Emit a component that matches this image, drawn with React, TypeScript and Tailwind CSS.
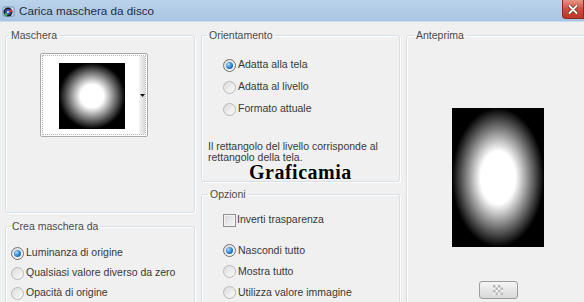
import type { ReactNode } from 'react'

function Radio({ label, checked = false }: { label: string; checked?: boolean }) {
  return (
    <div className="flex items-center gap-[2px] h-full">
      <span
        className={`w-[13px] h-[13px] rounded-full border flex items-center justify-center shrink-0 bg-gradient-to-br from-[#dcdcdc] to-[#fbfbfb] ${
          checked ? 'border-[#6f6f6f]' : 'border-[#b9b9b9]'
        }`}
      >
        {checked && (
          <span className="w-[7px] h-[7px] rounded-full bg-[radial-gradient(circle_at_35%_35%,#9fdcff_0%,#2a7fd0_55%,#0d3f86_100%)]" />
        )}
      </span>
      <span>{label}</span>
    </div>
  )
}

function Group({
  title,
  legend,
  className,
  children,
}: {
  title: string
  legend: string
  className: string
  children: ReactNode
}) {
  return (
    <fieldset
      className={`border border-[#d5dfe5] rounded-[3px] shadow-[inset_1px_1px_0_#fff,1px_1px_0_#fff] ${className}`}
    >
      <legend className={`px-[2px] leading-[13px] text-[#4a4a4a] ${legend}`}>{title}</legend>
      {children}
    </fieldset>
  )
}

export default function App() {
  return (
    <div
      className="relative w-[584px] h-[302px] overflow-hidden bg-[#f0f0f0] text-[10.5px] text-[#383838]"
      style={{ fontFamily: '"Liberation Sans", Arial, sans-serif' }}
    >
      {/* Title bar */}
      <div className="flex items-center h-[22px] bg-gradient-to-b from-[#bcd3ec] to-[#a9c4e1] border-b border-[#c9dbee]">
        <svg width="14" height="14" viewBox="0 0 14 14" className="ml-[2px] mr-[3px]">
          <rect x="1" y="3" width="11" height="9" rx="1" fill="#d9e8f7" stroke="#5a7ca6" strokeWidth="0.8" />
          <circle cx="6" cy="8" r="4.5" fill="#1b1b1b" />
          <circle cx="6" cy="8" r="3" fill="#3a4fb8" />
          <path d="M6 8 L9.5 5 A4.5 4.5 0 0 1 10.5 8 Z" fill="#d93a3a" />
          <path d="M6 8 L2 10 A4.5 4.5 0 0 0 5 12.4 Z" fill="#36b24a" />
          <circle cx="6" cy="8" r="1" fill="#e8e8e8" />
        </svg>
        <span className="text-[11.7px] text-[#1e2f45]">Carica maschera da disco</span>
        <div className="ml-auto self-start w-[22px] h-[19px] rounded-bl-[4px] border border-t-0 border-[#8a2a22] bg-gradient-to-b from-[#e39586] via-[#cf4c40] to-[#c0352a] flex items-center justify-center">
          <svg width="10" height="9" viewBox="0 0 10 9">
            <path d="M1.5 1 L8.5 8 M8.5 1 L1.5 8" stroke="#5a1a14" strokeWidth="3.2" strokeLinecap="round" />
            <path d="M1.5 1 L8.5 8 M8.5 1 L1.5 8" stroke="#fff" strokeWidth="2" strokeLinecap="round" />
          </svg>
        </div>
      </div>

      {/* Body */}
      <div className="flex gap-[6px] pl-[5px] pt-[7px]">
        {/* Column 1 */}
        <div className="w-[190px] shrink-0 flex flex-col gap-[7px]">
          <Group title="Maschera" legend="ml-[3px]" className="h-[184px]">
            <div className="ml-[34px] mt-[11px] w-[108px] h-[84px] border border-[#a9a9a9] rounded-[2px] bg-white p-[1px]">
              <div className="flex h-full border border-dotted border-[#b5b5b5]">
                <div className="flex-1 pl-[16px] pt-[7px]">
                  <div className="w-[66px] h-[66px] bg-[radial-gradient(circle_closest-side,#fff_35%,#000_100%)]" />
                </div>
                <div className="w-[6px] bg-gradient-to-r from-[#f4f4f4] to-[#d9d9d9] flex items-center justify-center">
                  <svg width="5" height="3" viewBox="0 0 5 3">
                    <path d="M0 0 H5 L2.5 3 Z" fill="#111" />
                  </svg>
                </div>
              </div>
            </div>
          </Group>
          <Group title="Crea maschera da" legend="ml-[4px]" className="h-[120px]">
            <div className="pl-[5px] pt-[10px]">
              <div className="h-[20px]">
                <Radio label="Luminanza di origine" checked />
              </div>
              <div className="h-[20px]">
                <Radio label="Qualsiasi valore diverso da zero" />
              </div>
              <div className="h-[20px]">
                <Radio label="Opacità di origine" />
              </div>
            </div>
          </Group>
        </div>

        {/* Column 2 */}
        <div className="w-[199px] shrink-0 flex flex-col gap-[6px]">
          <Group title="Orientamento" legend="ml-[5px]" className="h-[153px]">
            <div className="pl-[21px] pt-[12px]">
              <div className="h-[22px]">
                <Radio label="Adatta alla tela" checked />
              </div>
              <div className="h-[22px]">
                <Radio label="Adatta al livello" />
              </div>
              <div className="h-[22px]">
                <Radio label="Formato attuale" />
              </div>
            </div>
            <p className="pl-[6px] pr-[8px] mt-[21px] leading-[11px]">
              Il rettangolo del livello corrisponde al rettangolo della tela.
            </p>
          </Group>
          <Group title="Opzioni" legend="ml-[6px]" className="h-[130px]">
            <div className="pl-[21px] pt-[9px]">
              <div className="flex items-center gap-[1px] h-[20px]">
                <span className="w-[13px] h-[13px] border border-[#8f8f8f] bg-gradient-to-br from-[#d8d8d8] to-[#f8f8f8] shadow-[inset_0_0_0_1px_#f4f4f4]" />
                <span>Inverti trasparenza</span>
              </div>
              <div className="mt-[10px]">
                <div className="h-[21px]">
                  <Radio label="Nascondi tutto" checked />
                </div>
                <div className="h-[21px]">
                  <Radio label="Mostra tutto" />
                </div>
                <div className="h-[21px]">
                  <Radio label="Utilizza valore immagine" />
                </div>
              </div>
            </div>
          </Group>
        </div>

        {/* Column 3 */}
        <div className="w-[184px] shrink-0">
          <Group title="Anteprima" legend="ml-[7px]" className="h-[300px] flex flex-col items-center">
            <div className="mt-[66px] w-[92px] h-[139px] bg-[radial-gradient(ellipse_closest-side,#fff_38%,#000_100%)]" />
            <div className="mt-[34px] w-[39px] h-[18px] border border-[#9c9c9c] rounded-[3px] bg-gradient-to-b from-[#f5f5f5] to-[#d8d8d8] flex items-center justify-center">
              <svg width="10" height="10" viewBox="0 0 10 10">
                <rect x="0" y="0" width="10" height="10" fill="#f2f2f2" />
                <rect x="0" y="0" width="2.5" height="2.5" fill="#b8b8b8" />
                <rect x="5" y="0" width="2.5" height="2.5" fill="#b8b8b8" />
                <rect x="2.5" y="2.5" width="2.5" height="2.5" fill="#b8b8b8" />
                <rect x="7.5" y="2.5" width="2.5" height="2.5" fill="#b8b8b8" />
                <rect x="0" y="5" width="2.5" height="2.5" fill="#b8b8b8" />
                <rect x="5" y="5" width="2.5" height="2.5" fill="#b8b8b8" />
                <rect x="2.5" y="7.5" width="2.5" height="2.5" fill="#b8b8b8" />
                <rect x="7.5" y="7.5" width="2.5" height="2.5" fill="#b8b8b8" />
              </svg>
            </div>
          </Group>
        </div>
      </div>

      {/* Watermark */}
      <span
        className="absolute left-[249px] top-[161px] text-[20px] font-bold tracking-[0.5px] text-black leading-[22px] [text-shadow:0_0_2px_#fff,0_0_2px_#fff]"
        style={{ fontFamily: '"Liberation Serif", "Times New Roman", serif' }}
      >
        Graficamia
      </span>
    </div>
  )
}
